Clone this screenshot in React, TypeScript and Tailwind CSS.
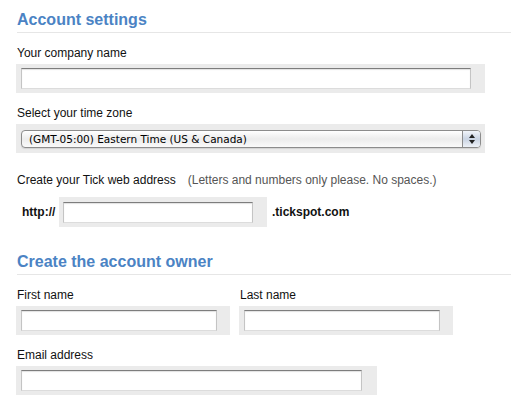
import React from "react";

const inputCls =
  "block h-[21px] bg-white border border-[#c4c4c4] border-t-[#7d7d7d] border-b-[#dcdcdc] shadow-[inset_0_1px_1px_rgba(0,0,0,0.12)] outline-none";

const SectionTitle = ({ children }: { children: React.ReactNode }) => (
  <h2 className="text-[16px] leading-[20px] font-bold text-[#4b83c4] pb-[2px] border-b border-[#e6e6e6] -mr-[17px]">
    {children}
  </h2>
);

const Label = ({ children, className = "" }: { children: React.ReactNode; className?: string }) => (
  <label className={`block text-[12px] leading-[14px] text-[#111] ${className}`}>{children}</label>
);

const Field = ({ boxW, inputW }: { boxW: string; inputW: string }) => (
  <div className={`-ml-px mt-[4px] bg-[#ebebeb] pl-[5px] pt-[4px] pb-[4px] ${boxW}`}>
    <input type="text" className={`${inputCls} ${inputW}`} />
  </div>
);

export default function App() {
  return (
    <div className="min-h-[403px] bg-white pl-[17px] pt-[10px] font-['Liberation_Sans',Arial,sans-serif] text-[#111]">
      {/* Account settings */}
      <SectionTitle>Account settings</SectionTitle>

      <Label className="mt-[13px]">Your company name</Label>
      <Field boxW="w-[469px]" inputW="w-[450px]" />

      <Label className="mt-[13px]">Select your time zone</Label>
      <div className="-ml-px mt-[4px] w-[469px] bg-[#ebebeb] pl-[5px] pt-[6px] pb-[5px]">
        <div className="flex h-[18px] w-[460px] items-stretch rounded-[4px] border border-[#8c8c8c] bg-gradient-to-b from-white via-[#ececec] to-[#fafafa] shadow-[0_1px_1px_rgba(0,0,0,0.1)]">
          <span className="flex-1 pl-[7px] font-['DejaVu_Sans',sans-serif] text-[10.5px] leading-[16px] text-black">
            (GMT-05:00) Eastern Time (US &amp; Canada)
          </span>
          <span className="flex w-[18px] flex-col items-center justify-center gap-[2px] rounded-r-[3px] border-l border-[#8c8c8c] bg-gradient-to-b from-[#f2f5fa] via-[#c9d3e2] to-[#eef2f8]">
            <svg width="6" height="4" viewBox="0 0 6 4">
              <path d="M3 0 L6 4 L0 4 Z" fill="#222" />
            </svg>
            <svg width="6" height="4" viewBox="0 0 6 4">
              <path d="M0 0 L6 0 L3 4 Z" fill="#222" />
            </svg>
          </span>
        </div>
      </div>

      <div className="mt-[20px] flex text-[12px] leading-[14px]">
        <span>Create your Tick web address</span>
        <span className="ml-[12px] text-[#555]">(Letters and numbers only please. No spaces.)</span>
      </div>
      <div className="mt-[10px] flex items-center text-[12px] font-bold">
        <span className="pl-[5px] w-[42px]">http://</span>
        <div className="w-[208px] bg-[#ebebeb] pl-[4px] pt-[5px] pb-[4px]">
          <input type="text" className={`${inputCls} w-[190px]`} />
        </div>
        <span className="ml-[5px]">.tickspot.com</span>
      </div>

      {/* Account owner */}
      <div className="mt-[25px]">
        <SectionTitle>Create the account owner</SectionTitle>
      </div>

      <div className="mt-[13px] flex gap-[10px]">
        <div>
          <Label>First name</Label>
          <Field boxW="w-[214px]" inputW="w-[196px]" />
        </div>
        <div>
          <Label>Last name</Label>
          <Field boxW="w-[214px]" inputW="w-[196px]" />
        </div>
      </div>

      <Label className="mt-[13px]">Email address</Label>
      <Field boxW="w-[361px]" inputW="w-[341px]" />
    </div>
  );
}
